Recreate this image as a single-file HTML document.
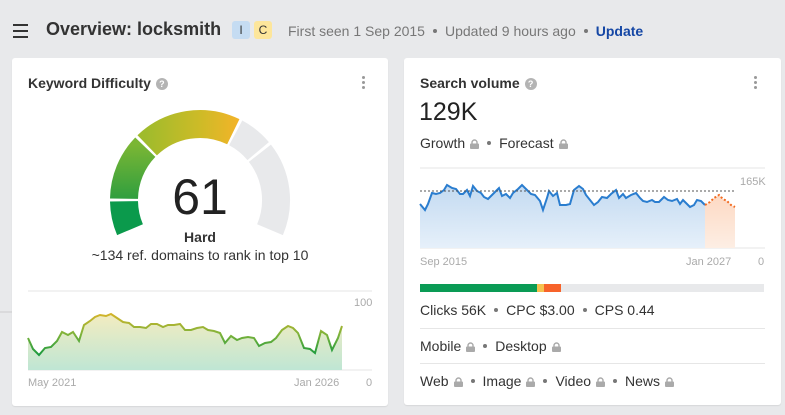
<!DOCTYPE html>
<html><head><meta charset="utf-8"><style>
*{margin:0;padding:0;box-sizing:border-box}
body{width:785px;height:415px;background:#e8e9eb;font-family:"Liberation Sans",Arial,sans-serif;color:#333;position:relative;overflow:hidden}
.a{position:absolute;white-space:nowrap}
.card{position:absolute;background:#fff;border-radius:3px;box-shadow:0 1px 1px rgba(0,0,0,.08)}
.t{font-size:14px;font-weight:bold;color:#333}
.q{display:inline-block;width:12px;height:12px;border-radius:50%;background:#b4b4b4;color:#fff;font-size:9px;text-align:center;line-height:12px;vertical-align:1px;margin-left:5px}
.dots{position:absolute;width:3px}
.dots i{display:block;width:3px;height:3px;border-radius:50%;background:#999;margin-bottom:2px}
.g{color:#aaa;font-size:11px}
.row{font-size:14px;color:#333}
.dot{display:inline-block;width:4px;height:4px;border-radius:50%;background:#777;vertical-align:3px;margin:0 8px}
.lk{display:inline-block;width:9px;height:10px;vertical-align:-1px;margin-left:5px}
</style></head><body>
<svg class="a" style="left:13px;top:24px" width="16" height="14"><rect y="0" width="15" height="2" fill="#333"/><rect y="6" width="15" height="2" fill="#333"/><rect y="12" width="15" height="2" fill="#333"/></svg>
<div class="a" style="left:46px;top:19px;font-size:18px;font-weight:bold;color:#333">Overview: locksmith</div>
<div class="a" style="left:232px;top:21px;width:18px;height:18px;background:#c5dcf2;border-radius:3px;font-size:12px;text-align:center;line-height:18px">I</div>
<div class="a" style="left:254px;top:21px;width:18px;height:18px;background:#fde69b;border-radius:3px;font-size:12px;text-align:center;line-height:18px">C</div>
<div class="a" style="left:288px;top:23px;font-size:14px;color:#777">First seen 1 Sep 2015<span class="dot" style="background:#777"></span>Updated 9 hours ago<span class="dot"></span><b style="color:#1547a5">Update</b></div>

<div class="card" style="left:12px;top:58px;width:376px;height:348px"></div>
<div class="a t" style="left:28px;top:75px">Keyword Difficulty<span class="q">?</span></div>
<div class="dots" style="left:362px;top:76px"><i></i><i></i><i></i></div>
<svg class="a" style="left:100px;top:100px" width="200" height="150" viewBox="100 100 200 150">
<defs><linearGradient id="yg" gradientUnits="userSpaceOnUse" x1="145" y1="0" x2="236" y2="0"><stop offset="0" stop-color="#9fbb2c"/><stop offset=".6" stop-color="#cdbb27"/><stop offset="1" stop-color="#f0b429"/></linearGradient>
<linearGradient id="gg" gradientUnits="userSpaceOnUse" x1="0" y1="200" x2="0" y2="145"><stop offset="0" stop-color="#2e9e3f"/><stop offset="1" stop-color="#7ab634"/></linearGradient></defs>
<g fill="none" stroke-width="28">
<path d="M130 229.7A76 76 0 0 1 124 201.3" stroke="#0b9a4c"/>
<path d="M124 198.7A76 76 0 0 1 145.3 147.2" stroke="url(#gg)"/>
<path d="M147.2 145.3A76 76 0 0 1 233.3 131.7" stroke="url(#yg)"/>
<path d="M235.7 132.9A76 76 0 0 1 258.2 151.1" stroke="#e8e9eb"/>
<path d="M259.9 153.2A76 76 0 0 1 270 229.7" stroke="#e8e9eb"/>
</g></svg>
<div class="a" style="left:150px;top:168px;width:100px;text-align:center;font-size:50px;color:#222">61</div>
<div class="a" style="left:150px;top:229px;width:100px;text-align:center;font-size:14px;font-weight:bold">Hard</div>
<div class="a" style="left:60px;top:247px;width:280px;text-align:center;font-size:14px">~134 ref. domains to rank in top 10</div>
<svg class="a" style="left:0;top:280px" width="400" height="120">
<defs><linearGradient id="lf" x1="0" y1="0" x2="0" y2="1"><stop offset="0" stop-color="#f3ecc0"/><stop offset="1" stop-color="#bfe6d4"/></linearGradient>
<linearGradient id="ls" x1="0" y1="0" x2="0" y2="1"><stop offset="0" stop-color="#d4b42a"/><stop offset=".5" stop-color="#7db33a"/><stop offset="1" stop-color="#1a9a3f"/></linearGradient></defs>
<line x1="0" y1="32" x2="12" y2="32" stroke="#ccc"/>
<line x1="28" y1="11" x2="372" y2="11" stroke="#e6e6e6"/>
<line x1="28" y1="90" x2="372" y2="90" stroke="#e6e6e6"/>
<polygon fill="url(#lf)" points="28,58 33,69 39,75 45,68 51,67 57,61 62,52 68,55 73,52 79,61 84,45 90,41 95,37 100,35 106,36 111,34 117,38 123,42 129,43 134,47 140,47 146,48 151,44 157,44 163,47 168,45 174,45 180,44 185,50 191,50 197,48 203,47 208,50 214,51 220,53 225,63 231,56 237,60 242,58 248,57 254,58 259,66 265,63 271,62 276,58 282,50 288,46 293,48 298,53 304,68 310,69 315,73 321,51 327,55 332,70 338,58 342,46 342,90 28,90"/>
<polyline fill="none" stroke="url(#ls)" stroke-width="2" points="28,58 33,69 39,75 45,68 51,67 57,61 62,52 68,55 73,52 79,61 84,45 90,41 95,37 100,35 106,36 111,34 117,38 123,42 129,43 134,47 140,47 146,48 151,44 157,44 163,47 168,45 174,45 180,44 185,50 191,50 197,48 203,47 208,50 214,51 220,53 225,63 231,56 237,60 242,58 248,57 254,58 259,66 265,63 271,62 276,58 282,50 288,46 293,48 298,53 304,68 310,69 315,73 321,51 327,55 332,70 338,58 342,46"/>
</svg>
<div class="a g" style="left:354px;top:297px">100</div>
<div class="a g" style="left:28px;top:377px">May 2021</div>
<div class="a g" style="left:294px;top:377px">Jan 2026</div>
<div class="a g" style="left:366px;top:377px">0</div>

<div class="card" style="left:404px;top:58px;width:377px;height:347px"></div>
<div class="a t" style="left:420px;top:75px">Search volume<span class="q">?</span></div>
<div class="dots" style="left:754px;top:76px"><i></i><i></i><i></i></div>
<div class="a" style="left:419px;top:98px;font-size:25px;color:#222">129K</div>
<div class="a row" style="left:420px;top:135px">Growth<svg class="lk" viewBox="0 0 9 10"><path d="M2 5V3.5a2.5 2.5 0 0 1 5 0V5" fill="none" stroke="#aaa" stroke-width="1.4"/><rect y="4.5" width="9" height="5.5" rx="1" fill="#aaa"/></svg><span class="dot"></span>Forecast<svg class="lk" viewBox="0 0 9 10"><path d="M2 5V3.5a2.5 2.5 0 0 1 5 0V5" fill="none" stroke="#aaa" stroke-width="1.4"/><rect y="4.5" width="9" height="5.5" rx="1" fill="#aaa"/></svg></div>
<svg class="a" style="left:400px;top:160px" width="385" height="100">
<defs><linearGradient id="bf" x1="0" y1="0" x2="0" y2="1"><stop offset="0" stop-color="#c3daf1"/><stop offset="1" stop-color="#e6f0fa"/></linearGradient>
<linearGradient id="of" x1="0" y1="0" x2="0" y2="1"><stop offset="0" stop-color="#fdd9c3"/><stop offset="1" stop-color="#fdeee4"/></linearGradient></defs>
<line x1="20" y1="8" x2="365" y2="8" stroke="#e6e6e6"/>
<line x1="20" y1="88" x2="365" y2="88" stroke="#e6e6e6"/>
<polygon fill="url(#bf)" points="20,44 25,50 28,44 32,33 36,34 40,33 44,30 47,25 52,28 56,29 60,34 63,34 67,30 70,36 73,26 77,31 81,33 84,37 88,39 92,35 95,32 99,28 102,36 106,34 110,38 113,33 118,29 122,25 127,30 131,34 135,35 140,41 143,50 147,38 149,31 153,36 157,33 160,45 166,45 170,44 174,30 179,26 183,29 186,35 190,40 194,45 198,42 202,37 207,38 211,34 216,30 219,38 223,34 226,38 231,35 236,33 240,38 243,41 247,42 252,40 255,42 259,42 264,37 268,40 272,41 277,39 280,44 283,40 286,43 290,47 294,45 297,40 301,41 305,45 305,88 20,88"/>
<polygon fill="url(#of)" points="305,45 310,42 314,38 319,35 323,39 327,41 331,45 335,47 335,88 305,88"/>
<polyline fill="none" stroke="#2a7dcf" stroke-width="2" points="20,44 25,50 28,44 32,33 36,34 40,33 44,30 47,25 52,28 56,29 60,34 63,34 67,30 70,36 73,26 77,31 81,33 84,37 88,39 92,35 95,32 99,28 102,36 106,34 110,38 113,33 118,29 122,25 127,30 131,34 135,35 140,41 143,50 147,38 149,31 153,36 157,33 160,45 166,45 170,44 174,30 179,26 183,29 186,35 190,40 194,45 198,42 202,37 207,38 211,34 216,30 219,38 223,34 226,38 231,35 236,33 240,38 243,41 247,42 252,40 255,42 259,42 264,37 268,40 272,41 277,39 280,44 283,40 286,43 290,47 294,45 297,40 301,41 305,45"/>
<line x1="20" y1="31" x2="335" y2="31" stroke="#555" stroke-dasharray="2 2"/>
<polyline fill="none" stroke="#f26b21" stroke-width="2" stroke-dasharray="2 2" points="305,45 310,42 314,38 319,35 323,39 327,41 331,45 335,47"/>
</svg>
<div class="a g" style="left:740px;top:176px">165K</div>
<div class="a g" style="left:420px;top:256px">Sep 2015</div>
<div class="a g" style="left:686px;top:256px">Jan 2027</div>
<div class="a g" style="left:758px;top:256px">0</div>
<div class="a" style="left:420px;top:284px;width:344px;height:8px;background:#e8e9eb"></div>
<div class="a" style="left:420px;top:284px;width:117px;height:8px;background:#0a9b55"></div>
<div class="a" style="left:537px;top:284px;width:7px;height:8px;background:#f6c14f"></div>
<div class="a" style="left:544px;top:284px;width:17px;height:8px;background:#f7632a"></div>
<div class="a row" style="left:420px;top:302px">Clicks 56K<span class="dot"></span>CPC $3.00<span class="dot"></span>CPS 0.44</div>
<div class="a" style="left:420px;top:328px;width:345px;height:1px;background:#e6e6e6"></div>
<div class="a row" style="left:420px;top:338px">Mobile<svg class="lk" viewBox="0 0 9 10"><path d="M2 5V3.5a2.5 2.5 0 0 1 5 0V5" fill="none" stroke="#aaa" stroke-width="1.4"/><rect y="4.5" width="9" height="5.5" rx="1" fill="#aaa"/></svg><span class="dot"></span>Desktop<svg class="lk" viewBox="0 0 9 10"><path d="M2 5V3.5a2.5 2.5 0 0 1 5 0V5" fill="none" stroke="#aaa" stroke-width="1.4"/><rect y="4.5" width="9" height="5.5" rx="1" fill="#aaa"/></svg></div>
<div class="a" style="left:420px;top:363px;width:345px;height:1px;background:#e6e6e6"></div>
<div class="a row" style="left:420px;top:373px">Web<svg class="lk" viewBox="0 0 9 10"><path d="M2 5V3.5a2.5 2.5 0 0 1 5 0V5" fill="none" stroke="#aaa" stroke-width="1.4"/><rect y="4.5" width="9" height="5.5" rx="1" fill="#aaa"/></svg><span class="dot"></span>Image<svg class="lk" viewBox="0 0 9 10"><path d="M2 5V3.5a2.5 2.5 0 0 1 5 0V5" fill="none" stroke="#aaa" stroke-width="1.4"/><rect y="4.5" width="9" height="5.5" rx="1" fill="#aaa"/></svg><span class="dot"></span>Video<svg class="lk" viewBox="0 0 9 10"><path d="M2 5V3.5a2.5 2.5 0 0 1 5 0V5" fill="none" stroke="#aaa" stroke-width="1.4"/><rect y="4.5" width="9" height="5.5" rx="1" fill="#aaa"/></svg><span class="dot"></span>News<svg class="lk" viewBox="0 0 9 10"><path d="M2 5V3.5a2.5 2.5 0 0 1 5 0V5" fill="none" stroke="#aaa" stroke-width="1.4"/><rect y="4.5" width="9" height="5.5" rx="1" fill="#aaa"/></svg></div>
</body></html>
